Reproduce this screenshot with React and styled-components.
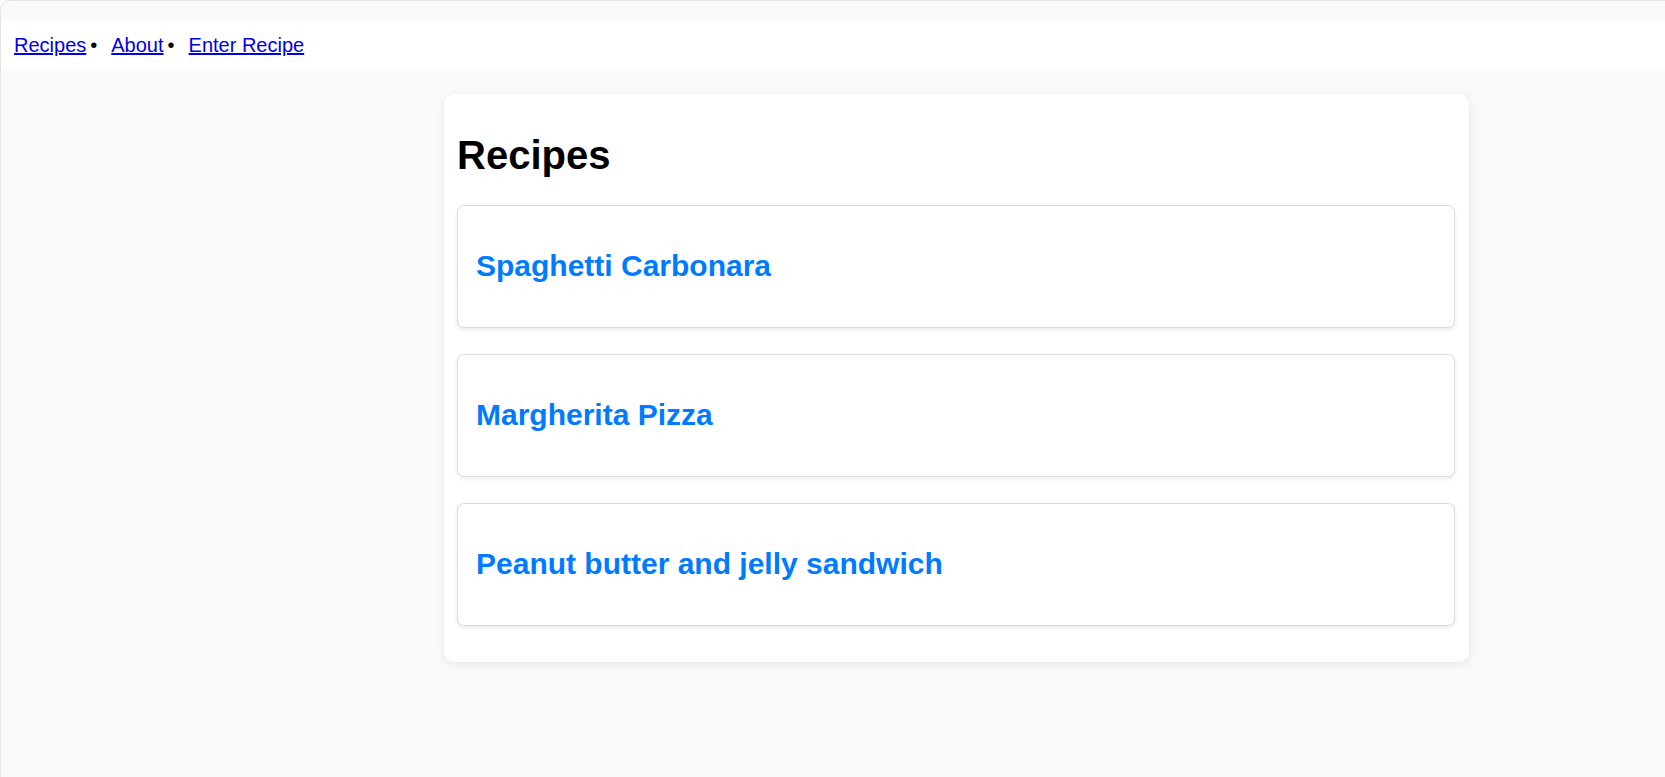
import React from "react";
import styled, { createGlobalStyle } from "styled-components";

const GlobalStyle = createGlobalStyle`
  html, body {
    margin: 0;
    padding: 0;
    background: #ffffff;
  }
  body {
    font-family: "Liberation Sans", Arial, sans-serif;
    color: #000;
  }
`;

const Frame = styled.div`
  box-sizing: border-box;
  min-height: 100vh;
  background: #f9f9f9;
  border-top: 1px solid #e4e4e4;
  border-left: 1px solid #e4e4e4;
  border-top-left-radius: 9px;
  padding-top: 20px;
  overflow: hidden;
`;

const NavBar = styled.nav`
  display: flex;
  align-items: center;
  background: #ffffff;
  padding: 13px 12px 12px 13px;
  font-size: 20px;
  line-height: 23px;
`;

const NavLink = styled.a`
  color: #0000ee;
  text-decoration: underline;
  cursor: pointer;
`;

const Separator = styled.span`
  display: inline-block;
  color: #000;
  margin: 0 14px 0 4px;
`;

const Main = styled.main`
  display: flex;
  padding: 25px 0 40px 443px;
`;

const Panel = styled.section`
  box-sizing: border-box;
  width: 1025px;
  background: #ffffff;
  border-radius: 10px;
  box-shadow: 0 2px 8px rgba(0, 0, 0, 0.08);
  padding: 13px 14px 36px 13px;
  display: flex;
  flex-direction: column;
  gap: 26px;
`;

const Title = styled.h1`
  margin: 25px 0 1px;
  font-size: 40px;
  line-height: 46px;
  font-weight: 700;
  color: #000;
`;

const RecipeCard = styled.article`
  border: 1px solid #dcdcdc;
  border-radius: 7px;
  background: #ffffff;
  box-shadow: 0 2px 4px rgba(0, 0, 0, 0.08);
  padding: 18px 19px 19px 18px;
`;

const RecipeName = styled.h2`
  margin: 25px 0;
  font-size: 30px;
  line-height: 34px;
  font-weight: 700;
  color: #007bff;
`;

const links = ["Recipes", "About", "Enter Recipe"];
const recipes = [
  "Spaghetti Carbonara",
  "Margherita Pizza",
  "Peanut butter and jelly sandwich",
];

export default function App() {
  return (
    <>
      <GlobalStyle />
      <Frame>
        <NavBar>
          {links.map((l, i) => (
            <React.Fragment key={l}>
              <NavLink href="#">{l}</NavLink>
              {i < links.length - 1 && <Separator>•</Separator>}
            </React.Fragment>
          ))}
        </NavBar>
        <Main>
          <Panel>
            <Title>Recipes</Title>
            {recipes.map((r) => (
              <RecipeCard key={r}>
                <RecipeName>{r}</RecipeName>
              </RecipeCard>
            ))}
          </Panel>
        </Main>
      </Frame>
    </>
  );
}
